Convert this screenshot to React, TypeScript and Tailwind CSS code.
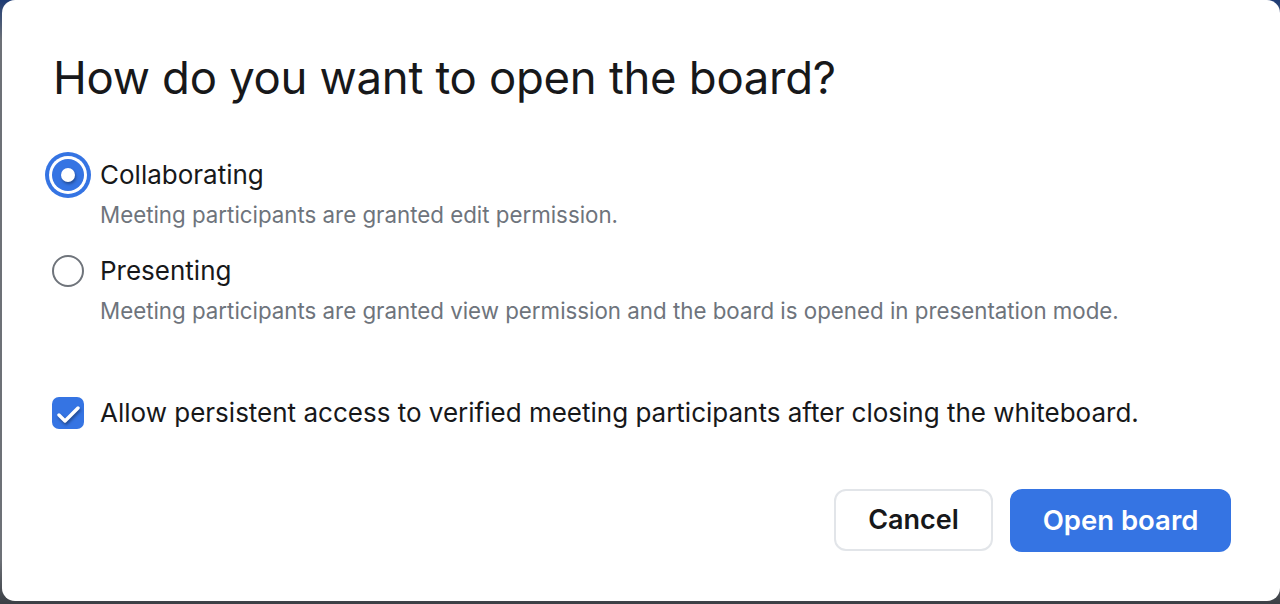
import { useState } from "react"

const BLUE = "#3574e3"

function Radio({ checked }: { checked: boolean }) {
    if (checked) {
        return (
            <span className="flex h-8 w-8 shrink-0 items-center justify-center rounded-full bg-[#3574e3] ring-4 ring-[#3574e3] ring-offset-[3px] ring-offset-white">
                <span className="h-[14px] w-[14px] rounded-full bg-white shadow-[1px_2px_3px_rgba(0,0,0,0.35)]" />
            </span>
        )
    }
    return (
        <span className="h-8 w-8 shrink-0 rounded-full border-2 border-[#6f747b] bg-white" />
    )
}

export default function App() {

    const [mode, setMode] = useState("collab")
    const [persist, setPersist] = useState(true)

    const options = [
        {
            key: "collab",
            label: "Collaborating",
            desc: "Meeting participants are granted edit permission.",
        },
        {
            key: "present",
            label: "Presenting",
            desc: "Meeting participants are granted view permission and the board is opened in presentation mode.",
        },
    ]

    return (
        <div className="flex h-[604px] w-[1280px] bg-[linear-gradient(180deg,#1d3b74_0px,#6d7177_40px,#6d7177_560px,#3b3f45_604px)] font-['Inter',sans-serif]">

            <div className="mb-[3px] ml-[2px] flex flex-1 flex-col rounded-[13px] bg-white pl-[50px] pr-[49px] pb-[49px]">

                <h1 className="mt-[54px] pl-[1px] text-[45.5px] leading-[48px] font-normal tracking-[-0.3px] text-[#17181a]">
                    How do you want to open the board?
                </h1>

                <div className="mt-[57px] flex flex-col gap-[27px]">
                    {options.map((o) => (
                        <button
                            key={o.key}
                            onClick={() => setMode(o.key)}
                            className="flex items-start gap-[16px] text-left"
                        >
                            <Radio checked={mode === o.key} />
                            <span className="flex flex-col">
                                <span className="text-[26px] leading-[32px] text-[#17181a]">
                                    {o.label}
                                </span>
                                <span className="mt-[11px] text-[22.3px] leading-[26px] text-[#6e747c]">
                                    {o.desc}
                                </span>
                            </span>
                        </button>
                    ))}
                </div>

                <button
                    onClick={() => setPersist(!persist)}
                    className="mt-[73px] flex items-center gap-[16px] text-left"
                >
                    <span
                        className="flex h-8 w-8 shrink-0 items-center justify-center rounded-[7px]"
                        style={{ background: persist ? BLUE : "#fff" }}
                    >
                        {persist && (
                            <svg width="32" height="32" viewBox="0 0 32 32" className="drop-shadow-[1px_2px_1.5px_rgba(0,0,0,0.4)]">
                                <path d="M7 18l6 6 13-13" fill="none" stroke="#fff" strokeWidth="3.4" strokeLinecap="round" strokeLinejoin="round" />
                            </svg>
                        )}
                    </span>
                    <span className="text-[26px] leading-[32px] text-[#17181a]">
                        Allow persistent access to verified meeting participants after closing the whiteboard.
                    </span>
                </button>

                <div className="mt-auto flex justify-end gap-[17px]">
                    <button className="h-[62px] w-[159px] rounded-[12px] border-2 border-[#e2e5e9] bg-white text-[27px] font-semibold text-[#17181a]">
                        Cancel
                    </button>
                    <button className="h-[63px] w-[221px] rounded-[12px] bg-[#3574e3] text-[27.5px] font-semibold text-white">
                        Open board
                    </button>
                </div>

            </div>

        </div>
    )
}
